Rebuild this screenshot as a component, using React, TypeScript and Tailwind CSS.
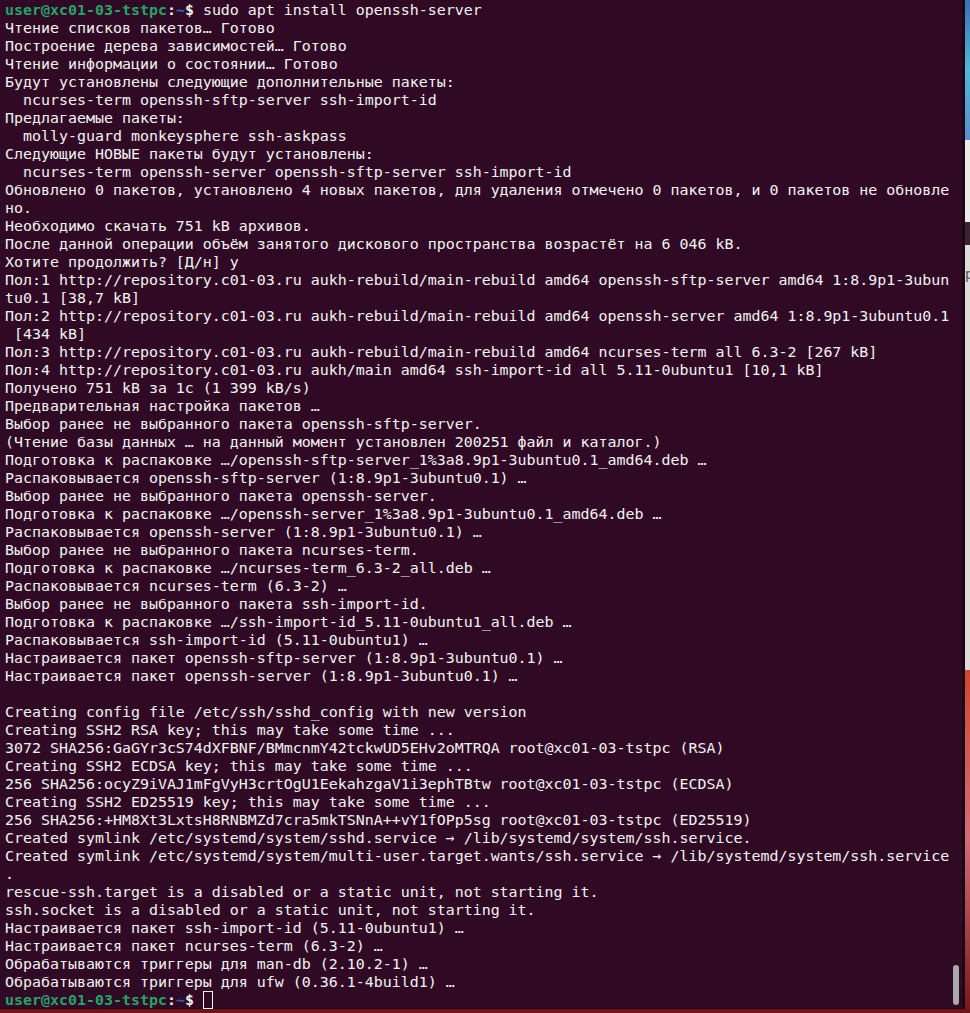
const lines: string[] = [
  "",
  "Чтение списков пакетов… Готово",
  "Построение дерева зависимостей… Готово",
  "Чтение информации о состоянии… Готово",
  "Будут установлены следующие дополнительные пакеты:",
  "  ncurses-term openssh-sftp-server ssh-import-id",
  "Предлагаемые пакеты:",
  "  molly-guard monkeysphere ssh-askpass",
  "Следующие НОВЫЕ пакеты будут установлены:",
  "  ncurses-term openssh-server openssh-sftp-server ssh-import-id",
  "Обновлено 0 пакетов, установлено 4 новых пакетов, для удаления отмечено 0 пакетов, и 0 пакетов не обновле",
  "но.",
  "Необходимо скачать 751 kB архивов.",
  "После данной операции объём занятого дискового пространства возрастёт на 6 046 kB.",
  "Хотите продолжить? [Д/н] y",
  "Пол:1 http://repository.c01-03.ru aukh-rebuild/main-rebuild amd64 openssh-sftp-server amd64 1:8.9p1-3ubun",
  "tu0.1 [38,7 kB]",
  "Пол:2 http://repository.c01-03.ru aukh-rebuild/main-rebuild amd64 openssh-server amd64 1:8.9p1-3ubuntu0.1",
  " [434 kB]",
  "Пол:3 http://repository.c01-03.ru aukh-rebuild/main-rebuild amd64 ncurses-term all 6.3-2 [267 kB]",
  "Пол:4 http://repository.c01-03.ru aukh/main amd64 ssh-import-id all 5.11-0ubuntu1 [10,1 kB]",
  "Получено 751 kB за 1с (1 399 kB/s)",
  "Предварительная настройка пакетов …",
  "Выбор ранее не выбранного пакета openssh-sftp-server.",
  "(Чтение базы данных … на данный момент установлен 200251 файл и каталог.)",
  "Подготовка к распаковке …/openssh-sftp-server_1%3a8.9p1-3ubuntu0.1_amd64.deb …",
  "Распаковывается openssh-sftp-server (1:8.9p1-3ubuntu0.1) …",
  "Выбор ранее не выбранного пакета openssh-server.",
  "Подготовка к распаковке …/openssh-server_1%3a8.9p1-3ubuntu0.1_amd64.deb …",
  "Распаковывается openssh-server (1:8.9p1-3ubuntu0.1) …",
  "Выбор ранее не выбранного пакета ncurses-term.",
  "Подготовка к распаковке …/ncurses-term_6.3-2_all.deb …",
  "Распаковывается ncurses-term (6.3-2) …",
  "Выбор ранее не выбранного пакета ssh-import-id.",
  "Подготовка к распаковке …/ssh-import-id_5.11-0ubuntu1_all.deb …",
  "Распаковывается ssh-import-id (5.11-0ubuntu1) …",
  "Настраивается пакет openssh-sftp-server (1:8.9p1-3ubuntu0.1) …",
  "Настраивается пакет openssh-server (1:8.9p1-3ubuntu0.1) …",
  "",
  "Creating config file /etc/ssh/sshd_config with new version",
  "Creating SSH2 RSA key; this may take some time ...",
  "3072 SHA256:GaGYr3cS74dXFBNF/BMmcnmY42tckwUD5EHv2oMTRQA root@xc01-03-tstpc (RSA)",
  "Creating SSH2 ECDSA key; this may take some time ...",
  "256 SHA256:ocyZ9iVAJ1mFgVyH3crtOgU1EekahzgaV1i3ephTBtw root@xc01-03-tstpc (ECDSA)",
  "Creating SSH2 ED25519 key; this may take some time ...",
  "256 SHA256:+HM8Xt3LxtsH8RNBMZd7cra5mkTSNnA++vY1fOPp5sg root@xc01-03-tstpc (ED25519)",
  "Created symlink /etc/systemd/system/sshd.service → /lib/systemd/system/ssh.service.",
  "Created symlink /etc/systemd/system/multi-user.target.wants/ssh.service → /lib/systemd/system/ssh.service",
  ".",
  "rescue-ssh.target is a disabled or a static unit, not starting it.",
  "ssh.socket is a disabled or a static unit, not starting it.",
  "Настраивается пакет ssh-import-id (5.11-0ubuntu1) …",
  "Настраивается пакет ncurses-term (6.3-2) …",
  "Обрабатываются триггеры для man-db (2.10.2-1) …",
  "Обрабатываются триггеры для ufw (0.36.1-4build1) …",
];

function Prompt() {
  return (
    <span className="font-bold">
      <span className="text-[#26a269]">user@xc01-03-tstpc</span>
      <span className="text-[#f2f2f2]">:</span>
      <span className="text-[#2a6bc8]">~</span>
      <span className="text-[#f2f2f2]">$</span>
    </span>
  );
}

export default function App() {
  return (
    <div className="flex h-[1013px] w-[970px] flex-col overflow-hidden bg-[#7a1a1e]">
      <div className="flex h-[1009px]">
        <div className="relative w-[965px] border-r-[3px] border-b border-[#1c0714] bg-[#300a24] pl-[5px] pt-px font-['DejaVu_Sans_Mono',monospace] text-[14.95px] leading-[18px] text-[#f2f2f2]">
          {lines.map((line, i) => (
            <div key={i} className="h-[18px] whitespace-pre">
              {i === 0 ? (
                <>
                  <Prompt /> sudo apt install openssh-server
                </>
              ) : (
                line
              )}
            </div>
          ))}
          <div className="flex h-[18px] items-center whitespace-pre">
            <Prompt />
            <span> </span>
            <span className="h-[18px] w-[10px] border border-[#f2f2f2]" />
          </div>
          <div className="absolute right-[3px] bottom-[3px] h-[40px] w-[6px] rounded-full bg-[#a9a9a9]" />
        </div>
        <div className="flex w-[5px] flex-col">
          <div className="h-[140px] bg-gradient-to-b from-[#3b6fb4] via-[#4fb8d8] to-[#5a8ccc]" />
          <div className="h-[82px] bg-[#ececec]" />
          <div className="h-[23px] bg-[#3b2230]" />
          <div className="h-[425px] overflow-hidden bg-[#dcdcdc] pt-[22px] font-['DejaVu_Sans',sans-serif] text-[14px] leading-[14px] text-[#555]">
            р
          </div>
          <div className="flex-1 bg-gradient-to-b from-[#d2452c] via-[#d46a78] to-[#7a1620]" />
        </div>
      </div>
      <div className="h-[4px] bg-[#6e1419]" />
    </div>
  );
}
